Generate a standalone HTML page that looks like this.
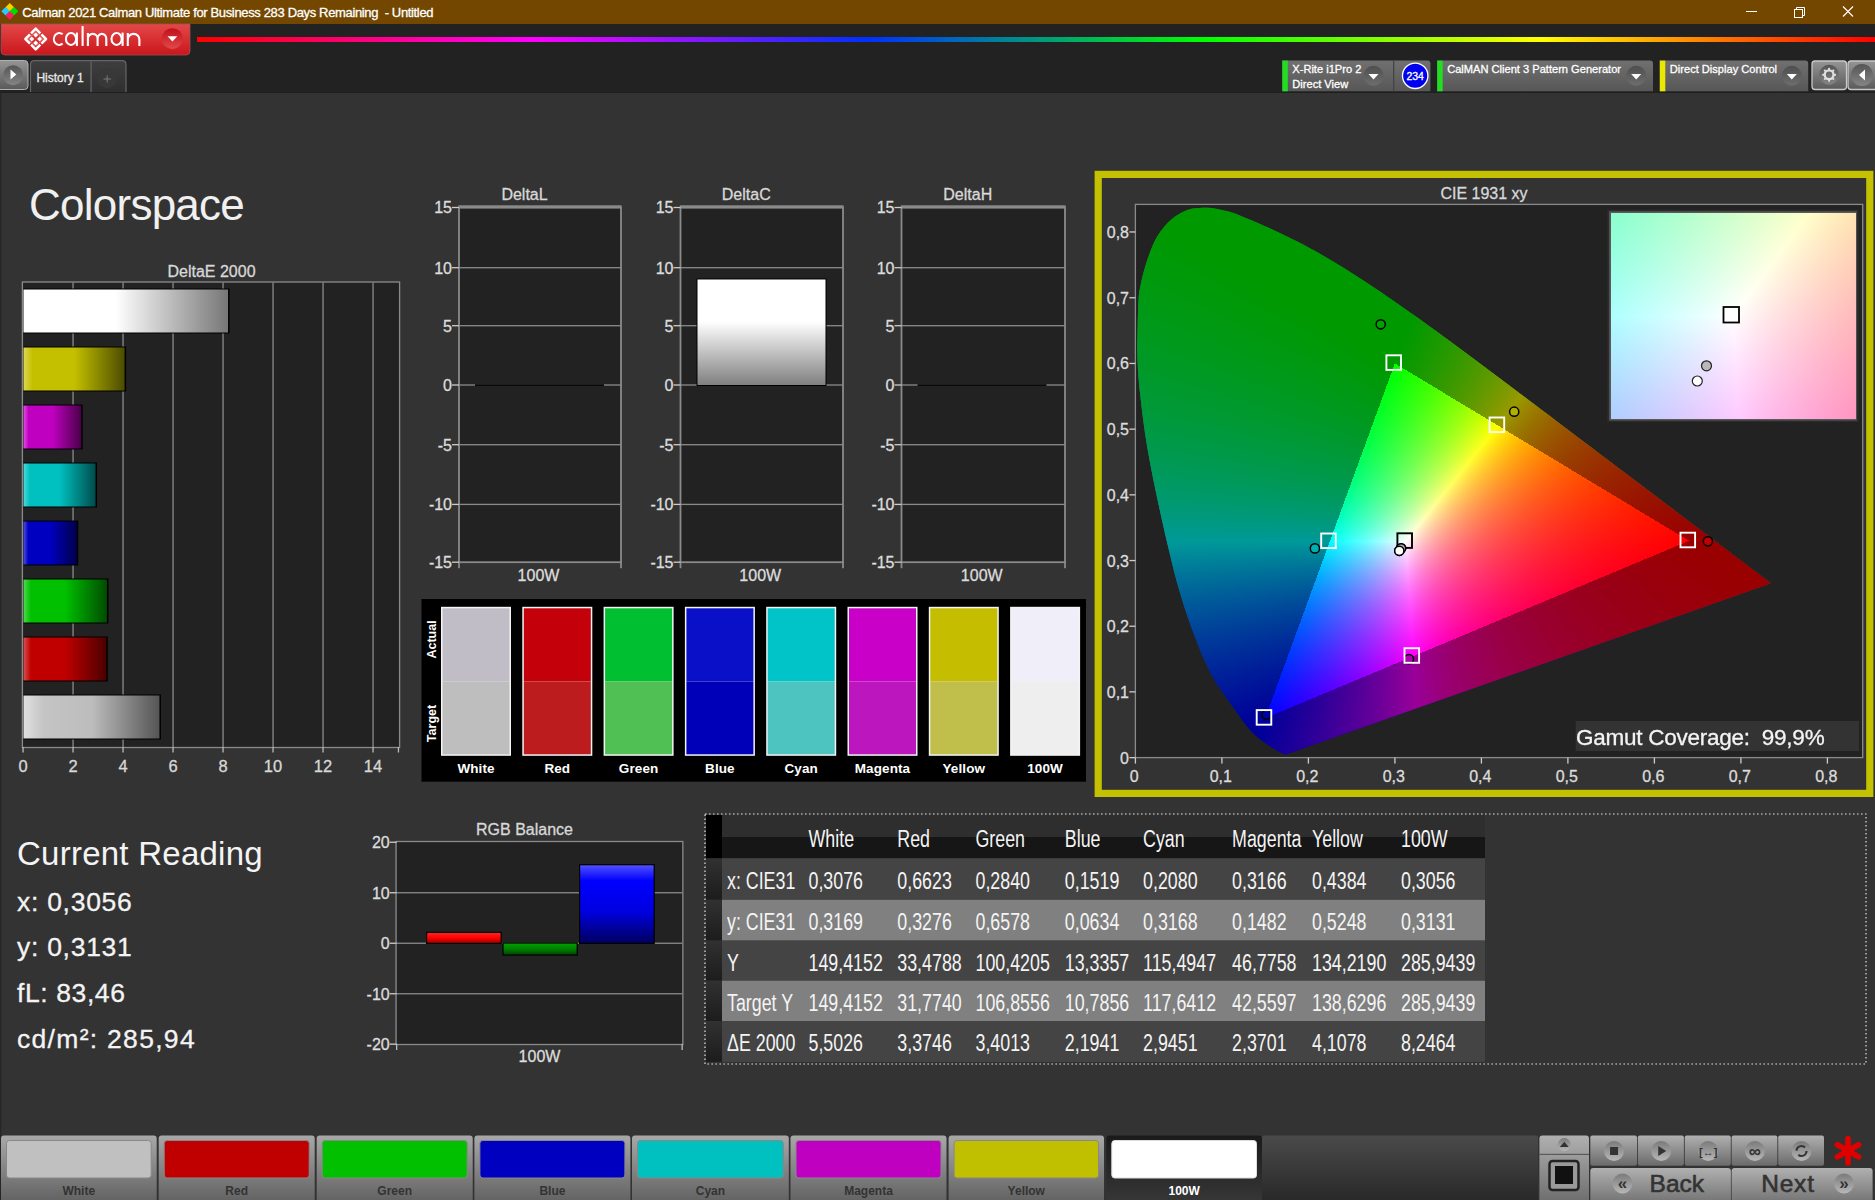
<!DOCTYPE html><html><head><meta charset="utf-8"><title>Calman</title><style>
html,body{margin:0;padding:0;}body{width:1875px;height:1200px;overflow:hidden;position:relative;background:#333;font-family:"Liberation Sans",sans-serif;}
svg{position:absolute;left:0;top:0;} text{font-family:"Liberation Sans",sans-serif;}
#cie{position:absolute;left:1136px;top:205px;}
#ins{position:absolute;left:1611px;top:213px;}
</style></head><body>
<svg id="bg" width="1875" height="1200" viewBox="0 0 1875 1200" style="z-index:0">
<defs>
<linearGradient id="rainbow" x1="0" x2="1" y1="0" y2="0"><stop offset="0" stop-color="#ff0000"/><stop offset="0.2" stop-color="#ff00ff"/><stop offset="0.4" stop-color="#0030ff"/><stop offset="0.6" stop-color="#00ff00"/><stop offset="0.8" stop-color="#ffff00"/><stop offset="1" stop-color="#ff0000"/></linearGradient>
<linearGradient id="redbtn" x1="0" x2="0" y1="0" y2="1"><stop offset="0" stop-color="#e44848"/><stop offset="1" stop-color="#c9161c"/></linearGradient>
<linearGradient id="reddd" x1="0" x2="0" y1="0" y2="1"><stop offset="0" stop-color="#c0101a"/><stop offset="1" stop-color="#e04a4a"/></linearGradient>
<linearGradient id="graybtn" x1="0" x2="0" y1="0" y2="1"><stop offset="0" stop-color="#959595"/><stop offset="1" stop-color="#5a5a5a"/></linearGradient>
<linearGradient id="graycirc" x1="0" x2="0" y1="0" y2="1"><stop offset="0" stop-color="#555"/><stop offset="1" stop-color="#858585"/></linearGradient>
<linearGradient id="tabbg" x1="0" x2="0" y1="0" y2="1"><stop offset="0" stop-color="#3e3e3e"/><stop offset="1" stop-color="#2f2f2f"/></linearGradient>
<linearGradient id="devbg" x1="0" x2="0" y1="0" y2="1"><stop offset="0" stop-color="#707070"/><stop offset="1" stop-color="#575757"/></linearGradient>
<linearGradient id="devcirc" x1="0" x2="0" y1="0" y2="1"><stop offset="0" stop-color="#4e4e4e"/><stop offset="1" stop-color="#6e6e6e"/></linearGradient>
<linearGradient id="hb_w" x1="0" x2="1" y1="0" y2="0"><stop offset="0" stop-color="#ffffff"/><stop offset="0.45" stop-color="#ffffff"/><stop offset="1" stop-color="#777777"/></linearGradient>
<linearGradient id="hb_y" x1="0" x2="1" y1="0" y2="0"><stop offset="0" stop-color="#dcd850"/><stop offset="0.09" stop-color="#c4c000"/><stop offset="0.5" stop-color="#c4c000"/><stop offset="1" stop-color="#4c4c00"/></linearGradient>
<linearGradient id="hb_m" x1="0" x2="1" y1="0" y2="0"><stop offset="0" stop-color="#e050e0"/><stop offset="0.09" stop-color="#c000c0"/><stop offset="0.5" stop-color="#c000c0"/><stop offset="1" stop-color="#4a004a"/></linearGradient>
<linearGradient id="hb_c" x1="0" x2="1" y1="0" y2="0"><stop offset="0" stop-color="#50d8d8"/><stop offset="0.09" stop-color="#00c0c0"/><stop offset="0.5" stop-color="#00c0c0"/><stop offset="1" stop-color="#004c4c"/></linearGradient>
<linearGradient id="hb_b" x1="0" x2="1" y1="0" y2="0"><stop offset="0" stop-color="#5050e0"/><stop offset="0.09" stop-color="#0000c0"/><stop offset="0.5" stop-color="#0000c0"/><stop offset="1" stop-color="#00004c"/></linearGradient>
<linearGradient id="hb_g" x1="0" x2="1" y1="0" y2="0"><stop offset="0" stop-color="#50d850"/><stop offset="0.09" stop-color="#00c000"/><stop offset="0.5" stop-color="#00c000"/><stop offset="1" stop-color="#004c00"/></linearGradient>
<linearGradient id="hb_r" x1="0" x2="1" y1="0" y2="0"><stop offset="0" stop-color="#d85050"/><stop offset="0.09" stop-color="#c00000"/><stop offset="0.5" stop-color="#c00000"/><stop offset="1" stop-color="#4c0000"/></linearGradient>
<linearGradient id="hb_gr" x1="0" x2="1" y1="0" y2="0"><stop offset="0" stop-color="#e0e0e0"/><stop offset="0.15" stop-color="#c4c4c4"/><stop offset="0.5" stop-color="#bdbdbd"/><stop offset="1" stop-color="#555555"/></linearGradient>
<linearGradient id="vb_w" x1="0" x2="0" y1="0" y2="1"><stop offset="0" stop-color="#ffffff"/><stop offset="0.4" stop-color="#ffffff"/><stop offset="1" stop-color="#808080"/></linearGradient>
<linearGradient id="vb_r" x1="0" x2="0" y1="0" y2="1"><stop offset="0" stop-color="#ff2020"/><stop offset="0.5" stop-color="#ff0000"/><stop offset="1" stop-color="#a00000"/></linearGradient>
<linearGradient id="vb_g" x1="0" x2="0" y1="0" y2="1"><stop offset="0" stop-color="#00a000"/><stop offset="0.5" stop-color="#008000"/><stop offset="1" stop-color="#004800"/></linearGradient>
<linearGradient id="vb_b" x1="0" x2="0" y1="0" y2="1"><stop offset="0" stop-color="#5050ff"/><stop offset="0.2" stop-color="#0000ff"/><stop offset="0.6" stop-color="#0000e0"/><stop offset="1" stop-color="#000060"/></linearGradient>
<linearGradient id="btmbtn" x1="0" x2="0" y1="0" y2="1"><stop offset="0" stop-color="#a8a8a8"/><stop offset="1" stop-color="#5e5e5e"/></linearGradient>
<linearGradient id="btmsel" x1="0" x2="0" y1="0" y2="1"><stop offset="0" stop-color="#1a1a1a"/><stop offset="1" stop-color="#383838"/></linearGradient>
<linearGradient id="btmbar" x1="0" x2="0" y1="0" y2="1"><stop offset="0" stop-color="#4a4a4a"/><stop offset="1" stop-color="#262626"/></linearGradient>
<linearGradient id="ctlbtn" x1="0" x2="0" y1="0" y2="1"><stop offset="0" stop-color="#b0b0b0"/><stop offset="1" stop-color="#6a6a6a"/></linearGradient>
<linearGradient id="ctlcirc" x1="0" x2="0" y1="0" y2="1"><stop offset="0" stop-color="#7a7a7a"/><stop offset="1" stop-color="#b8b8b8"/></linearGradient>
<linearGradient id="rowhd" x1="0" x2="0" y1="0" y2="1"><stop offset="0" stop-color="#313131"/><stop offset="1" stop-color="#1c1c1c"/></linearGradient>
</defs>
<rect x="0" y="0" width="1875" height="24" fill="#734700"/>
<polygon points="9.8,2.9000000000000004 14.100000000000001,7.2 9.8,11.5 5.500000000000001,7.2" fill="#ffcc00"/>
<polygon points="5.6,7.000000000000001 9.899999999999999,11.3 5.6,15.600000000000001 1.2999999999999998,11.3" fill="#22ccff"/>
<polygon points="14.0,7.000000000000001 18.3,11.3 14.0,15.600000000000001 9.7,11.3" fill="#00dd00"/>
<polygon points="9.8,11.2 14.100000000000001,15.5 9.8,19.8 5.500000000000001,15.5" fill="#ff1a66"/>
<text x="22.3" y="16.8" font-size="13" fill="#ffffff" text-anchor="start" letter-spacing="-0.35" stroke="#ffffff" stroke-width="0.3" >Calman 2021 Calman Ultimate for Business 283 Days Remaining &#160;- Untitled</text>
<rect x="1746" y="11" width="11" height="1" fill="#fff"/>
<rect x="1794.5" y="9.5" width="8" height="8" fill="none" stroke="#fff" stroke-width="1"/>
<path d="M1796.5 9.5 V7.5 H1804.5 V15.5 H1802.5" fill="none" stroke="#fff" stroke-width="1"/>
<path d="M1843 6.5 L1853 16.5 M1853 6.5 L1843 16.5" stroke="#fff" stroke-width="1.1"/>
<rect x="0" y="24" width="1875" height="68" fill="#222222"/>
<path d="M1 24 H190 V51 Q190 55 186 55 H5 Q1 55 1 51 Z" fill="url(#redbtn)" stroke="#9a5050" stroke-width="0.8"/>
<g transform="translate(35.7,39) rotate(45)"><path d="M0.75 -7.3 H7.3 V-0.75 M7.3 0.75 V7.3 H0.75 M-0.75 7.3 H-7.3 V0.75 M-7.3 -0.75 V-7.3 H-0.75" fill="none" stroke="#fff" stroke-width="2.5" stroke-linejoin="round"/><rect x="-5.3" y="-5.3" width="10.6" height="10.6" fill="none" stroke="rgba(255,255,255,0.3)" stroke-width="0.8"/><rect x="-4.6" y="-4.6" width="3.6" height="3.6" rx="0.4" fill="#fff"/><rect x="1.0" y="-4.6" width="3.6" height="3.6" rx="0.4" fill="#fff"/><rect x="-4.6" y="1.0" width="3.6" height="3.6" rx="0.4" fill="#fff"/><rect x="1.0" y="1.0" width="3.6" height="3.6" rx="0.4" fill="#fff"/></g>
<g fill="none" stroke="#fff" stroke-width="2.1"><path d="M62.6 34.35 A5.3 6.0 0 1 0 62.6 43.55"/><ellipse cx="71.0" cy="38.95" rx="5.1" ry="6.0"/><path d="M76.9 32.6 V45.9"/><path d="M82.6 26.1 V45.9"/><path d="M87.9 33 V45.9 M87.9 38.7 A4.85 4.85 0 0 1 97.6 38.7 V45.9 M97.6 38.7 A4.35 4.85 0 0 1 106.3 38.7 V45.9"/><ellipse cx="116.6" cy="38.95" rx="5.1" ry="6.0"/><path d="M122.6 32.6 V45.9"/><path d="M127.8 33 V45.9 M127.8 39.7 A5.8 5.8 0 0 1 139.4 39.7 V45.9"/></g>
<circle cx="172.3" cy="38.7" r="10.5" fill="url(#reddd)"/>
<polygon points="167.5,36.2 177.3,36.2 172.4,41.6" fill="#fff"/>
<rect x="197" y="37" width="1678" height="5" fill="url(#rainbow)"/>
<path d="M-2 60.5 H24.5 Q28 60.5 28 64 V86 Q28 89.5 24.5 89.5 H-2 Z" fill="url(#graybtn)" stroke="#b0b0b0" stroke-width="1"/>
<circle cx="13.1" cy="75.2" r="10" fill="url(#graycirc)"/>
<polygon points="10.5,69.6 16.3,74.6 10.5,79.6" fill="#fff"/>
<path d="M30.5 92 V64.5 Q30.5 60.7 34.5 60.7 H122 Q126 60.7 126 64.5 V92" fill="url(#tabbg)" stroke="#666" stroke-width="1.2"/>
<rect x="90.3" y="61" width="1.6" height="31" fill="#5a5a5a"/>
<text x="36.4" y="81.6" font-size="12" fill="#e8e8e8" text-anchor="start" stroke="#e8e8e8" stroke-width="0.3" >History 1</text>
<circle cx="107.2" cy="78.2" r="10" fill="#383838"/>
<path d="M103.5 79 H111 M107.2 75.3 V82.7" stroke="#7a7a7a" stroke-width="1"/>
<path d="M1282.3 91.3 V60.6 H1427.4 Q1430.4 60.6 1430.4 63.6 V91.3 Z" fill="url(#devbg)"/><rect x="1282.3" y="60.6" width="5.5" height="30.7" fill="#22dd22"/><text x="1292.3" y="72.6" font-size="11.1" fill="#ffffff" text-anchor="start" stroke="#ffffff" stroke-width="0.3" >X-Rite i1Pro 2</text><text x="1292.3" y="88.0" font-size="11.1" fill="#ffffff" text-anchor="start" stroke="#ffffff" stroke-width="0.3" >Direct View</text><circle cx="1373.5" cy="75.8" r="10" fill="url(#devcirc)"/><polygon points="1368.5,74 1378.5,74 1373.5,79.5" fill="#fff"/>
<rect x="1393" y="61" width="1.3" height="30.3" fill="#444"/>
<circle cx="1415.2" cy="75.8" r="12.7" fill="#0000f0" stroke="#fff" stroke-width="1.3"/>
<text x="1415.2" y="79.8" font-size="10.5" fill="#ffffff" text-anchor="middle" stroke="#ffffff" stroke-width="0.3" >234</text>
<path d="M1437.2 91.3 V60.6 H1650 Q1653 60.6 1653 63.6 V91.3 Z" fill="url(#devbg)"/><rect x="1437.2" y="60.6" width="5.5" height="30.7" fill="#22dd22"/><text x="1447.2" y="72.6" font-size="11.1" fill="#ffffff" text-anchor="start" stroke="#ffffff" stroke-width="0.3" >CalMAN Client 3 Pattern Generator</text><circle cx="1636.2" cy="75.8" r="10" fill="url(#devcirc)"/><polygon points="1631.2,74 1641.2,74 1636.2,79.5" fill="#fff"/>
<path d="M1659.8 91.3 V60.6 H1805.2 Q1808.2 60.6 1808.2 63.6 V91.3 Z" fill="url(#devbg)"/><rect x="1659.8" y="60.6" width="5.5" height="30.7" fill="#e8e800"/><text x="1669.8" y="72.6" font-size="11.1" fill="#ffffff" text-anchor="start" stroke="#ffffff" stroke-width="0.3" >Direct Display Control</text><circle cx="1791.8" cy="75.8" r="10" fill="url(#devcirc)"/><polygon points="1786.8,74 1796.8,74 1791.8,79.5" fill="#fff"/>
<rect x="1812" y="61" width="34.5" height="28.5" rx="3" fill="url(#graybtn)" stroke="#c8c8c8" stroke-width="1.3"/>
<circle cx="1829.1" cy="74.8" r="10" fill="url(#graycirc)"/>
<g transform="translate(1829.1,74.8)" fill="#e0e0e0"><circle r="4.4" fill="none" stroke="#e0e0e0" stroke-width="2.3"/><rect x="-0.95" y="-6.9" width="1.9" height="3" transform="rotate(0)"/><rect x="-0.95" y="-6.9" width="1.9" height="3" transform="rotate(45)"/><rect x="-0.95" y="-6.9" width="1.9" height="3" transform="rotate(90)"/><rect x="-0.95" y="-6.9" width="1.9" height="3" transform="rotate(135)"/><rect x="-0.95" y="-6.9" width="1.9" height="3" transform="rotate(180)"/><rect x="-0.95" y="-6.9" width="1.9" height="3" transform="rotate(225)"/><rect x="-0.95" y="-6.9" width="1.9" height="3" transform="rotate(270)"/><rect x="-0.95" y="-6.9" width="1.9" height="3" transform="rotate(315)"/></g>
<rect x="1848" y="61" width="30" height="28.5" rx="3" fill="url(#graybtn)" stroke="#c8c8c8" stroke-width="1.3"/>
<circle cx="1862" cy="75" r="11" fill="url(#graycirc)"/>
<polygon points="1865,69.5 1859,75 1865,80.5" fill="#fff"/>
<rect x="0" y="92" width="1875" height="1" fill="#1f1f1f"/><rect x="0" y="93" width="1875" height="1107" fill="#333333"/>
<rect x="0" y="92" width="1.2" height="1108" fill="#262626"/>
<text x="29" y="220.3" font-size="44" fill="#f0f0f0" text-anchor="start" letter-spacing="-0.75" >Colorspace</text>
<text x="211.5" y="276.6" font-size="16" fill="#d8d8d8" text-anchor="middle" stroke="#d8d8d8" stroke-width="0.3" >DeltaE 2000</text>
<rect x="23" y="282.5" width="376" height="464.5" fill="#222222"/>
<rect x="72.4" y="282.5" width="1.3" height="465" fill="#8a8a8a"/>
<rect x="122.4" y="282.5" width="1.3" height="465" fill="#8a8a8a"/>
<rect x="172.4" y="282.5" width="1.3" height="465" fill="#8a8a8a"/>
<rect x="222.4" y="282.5" width="1.3" height="465" fill="#8a8a8a"/>
<rect x="272.4" y="282.5" width="1.3" height="465" fill="#8a8a8a"/>
<rect x="322.4" y="282.5" width="1.3" height="465" fill="#8a8a8a"/>
<rect x="372.4" y="282.5" width="1.3" height="465" fill="#8a8a8a"/>
<rect x="22.4" y="282" width="377.2" height="465.5" fill="none" stroke="#8a8a8a" stroke-width="1.3"/>
<rect x="23.5" y="288.5" width="206.06" height="45" fill="#000"/>
<rect x="23.5" y="289.5" width="204.56" height="43" fill="url(#hb_w)"/>
<rect x="23.5" y="346.5" width="102.59500000000001" height="45" fill="#000"/>
<rect x="23.5" y="347.5" width="101.09500000000001" height="43" fill="url(#hb_y)"/>
<rect x="23.5" y="404.5" width="59.152499999999996" height="45" fill="#000"/>
<rect x="23.5" y="405.5" width="57.652499999999996" height="43" fill="url(#hb_m)"/>
<rect x="23.5" y="462.5" width="73.5275" height="45" fill="#000"/>
<rect x="23.5" y="463.5" width="72.0275" height="43" fill="url(#hb_c)"/>
<rect x="23.5" y="520.5" width="54.752500000000005" height="45" fill="#000"/>
<rect x="23.5" y="521.5" width="53.252500000000005" height="43" fill="url(#hb_b)"/>
<rect x="23.5" y="578.5" width="84.9325" height="45" fill="#000"/>
<rect x="23.5" y="579.5" width="83.4325" height="43" fill="url(#hb_g)"/>
<rect x="23.5" y="636.5" width="84.265" height="45" fill="#000"/>
<rect x="23.5" y="637.5" width="82.765" height="43" fill="url(#hb_r)"/>
<rect x="23.5" y="694.5" width="137.465" height="45" fill="#000"/>
<rect x="23.5" y="695.5" width="135.965" height="43" fill="url(#hb_gr)"/>
<rect x="22.4" y="747" width="1.3" height="5.5" fill="#bbbbbb"/>
<text x="23" y="771.7" font-size="16.5" fill="#d8d8d8" text-anchor="middle" stroke="#d8d8d8" stroke-width="0.3" >0</text>
<rect x="72.4" y="747" width="1.3" height="5.5" fill="#bbbbbb"/>
<text x="73" y="771.7" font-size="16.5" fill="#d8d8d8" text-anchor="middle" stroke="#d8d8d8" stroke-width="0.3" >2</text>
<rect x="122.4" y="747" width="1.3" height="5.5" fill="#bbbbbb"/>
<text x="123" y="771.7" font-size="16.5" fill="#d8d8d8" text-anchor="middle" stroke="#d8d8d8" stroke-width="0.3" >4</text>
<rect x="172.4" y="747" width="1.3" height="5.5" fill="#bbbbbb"/>
<text x="173" y="771.7" font-size="16.5" fill="#d8d8d8" text-anchor="middle" stroke="#d8d8d8" stroke-width="0.3" >6</text>
<rect x="222.4" y="747" width="1.3" height="5.5" fill="#bbbbbb"/>
<text x="223" y="771.7" font-size="16.5" fill="#d8d8d8" text-anchor="middle" stroke="#d8d8d8" stroke-width="0.3" >8</text>
<rect x="272.4" y="747" width="1.3" height="5.5" fill="#bbbbbb"/>
<text x="273" y="771.7" font-size="16.5" fill="#d8d8d8" text-anchor="middle" stroke="#d8d8d8" stroke-width="0.3" >10</text>
<rect x="322.4" y="747" width="1.3" height="5.5" fill="#bbbbbb"/>
<text x="323" y="771.7" font-size="16.5" fill="#d8d8d8" text-anchor="middle" stroke="#d8d8d8" stroke-width="0.3" >12</text>
<rect x="372.4" y="747" width="1.3" height="5.5" fill="#bbbbbb"/>
<text x="373" y="771.7" font-size="16.5" fill="#d8d8d8" text-anchor="middle" stroke="#d8d8d8" stroke-width="0.3" >14</text>
<rect x="397.8" y="747" width="1.3" height="5.5" fill="#bbbbbb"/>
<text x="524.5" y="200.3" font-size="16" fill="#d8d8d8" text-anchor="middle" stroke="#d8d8d8" stroke-width="0.3" >DeltaL</text>
<rect x="459" y="207" width="162" height="355.20000000000005" fill="#222222"/>
<rect x="459" y="267.05" width="162" height="1.3" fill="#8a8a8a"/>
<rect x="459" y="325.05" width="162" height="1.3" fill="#8a8a8a"/>
<rect x="459" y="384.35" width="162" height="1.3" fill="#8a8a8a"/>
<rect x="459" y="444.05" width="162" height="1.3" fill="#8a8a8a"/>
<rect x="459" y="503.75" width="162" height="1.3" fill="#8a8a8a"/>
<rect x="458.35" y="205.3" width="163.3" height="3.3" fill="#8a8a8a"/>
<rect x="458.1" y="207" width="1.8" height="361.20000000000005" fill="#8a8a8a"/>
<rect x="620.1" y="207" width="1.8" height="361.20000000000005" fill="#8a8a8a"/>
<rect x="458.1" y="561.3000000000001" width="163.8" height="1.8" fill="#8a8a8a"/>
<rect x="452" y="206.85" width="7" height="1.3" fill="#cccccc"/>
<text x="452" y="213.4" font-size="16" fill="#dcdcdc" text-anchor="end" stroke="#dcdcdc" stroke-width="0.3" >15</text>
<rect x="452" y="267.05" width="7" height="1.3" fill="#cccccc"/>
<text x="452" y="273.59999999999997" font-size="16" fill="#dcdcdc" text-anchor="end" stroke="#dcdcdc" stroke-width="0.3" >10</text>
<rect x="452" y="325.05" width="7" height="1.3" fill="#cccccc"/>
<text x="452" y="331.59999999999997" font-size="16" fill="#dcdcdc" text-anchor="end" stroke="#dcdcdc" stroke-width="0.3" >5</text>
<rect x="452" y="384.35" width="7" height="1.3" fill="#cccccc"/>
<text x="452" y="390.9" font-size="16" fill="#dcdcdc" text-anchor="end" stroke="#dcdcdc" stroke-width="0.3" >0</text>
<rect x="452" y="444.05" width="7" height="1.3" fill="#cccccc"/>
<text x="452" y="450.59999999999997" font-size="16" fill="#dcdcdc" text-anchor="end" stroke="#dcdcdc" stroke-width="0.3" >-5</text>
<rect x="452" y="503.75" width="7" height="1.3" fill="#cccccc"/>
<text x="452" y="510.29999999999995" font-size="16" fill="#dcdcdc" text-anchor="end" stroke="#dcdcdc" stroke-width="0.3" >-10</text>
<rect x="452" y="561.5500000000001" width="7" height="1.3" fill="#cccccc"/>
<text x="452" y="568.1" font-size="16" fill="#dcdcdc" text-anchor="end" stroke="#dcdcdc" stroke-width="0.3" >-15</text>
<text x="538.5" y="580.5" font-size="16" fill="#dcdcdc" text-anchor="middle" stroke="#dcdcdc" stroke-width="0.3" >100W</text>
<rect x="475" y="384.2" width="129" height="1.8" fill="#0a0a0a"/>
<text x="746.25" y="200.3" font-size="16" fill="#d8d8d8" text-anchor="middle" stroke="#d8d8d8" stroke-width="0.3" >DeltaC</text>
<rect x="680.5" y="207" width="162.5" height="355.20000000000005" fill="#222222"/>
<rect x="680.5" y="267.05" width="162.5" height="1.3" fill="#8a8a8a"/>
<rect x="680.5" y="325.05" width="162.5" height="1.3" fill="#8a8a8a"/>
<rect x="680.5" y="384.35" width="162.5" height="1.3" fill="#8a8a8a"/>
<rect x="680.5" y="444.05" width="162.5" height="1.3" fill="#8a8a8a"/>
<rect x="680.5" y="503.75" width="162.5" height="1.3" fill="#8a8a8a"/>
<rect x="679.85" y="205.3" width="163.8" height="3.3" fill="#8a8a8a"/>
<rect x="679.6" y="207" width="1.8" height="361.20000000000005" fill="#8a8a8a"/>
<rect x="842.1" y="207" width="1.8" height="361.20000000000005" fill="#8a8a8a"/>
<rect x="679.6" y="561.3000000000001" width="164.3" height="1.8" fill="#8a8a8a"/>
<rect x="673.5" y="206.85" width="7" height="1.3" fill="#cccccc"/>
<text x="673.5" y="213.4" font-size="16" fill="#dcdcdc" text-anchor="end" stroke="#dcdcdc" stroke-width="0.3" >15</text>
<rect x="673.5" y="267.05" width="7" height="1.3" fill="#cccccc"/>
<text x="673.5" y="273.59999999999997" font-size="16" fill="#dcdcdc" text-anchor="end" stroke="#dcdcdc" stroke-width="0.3" >10</text>
<rect x="673.5" y="325.05" width="7" height="1.3" fill="#cccccc"/>
<text x="673.5" y="331.59999999999997" font-size="16" fill="#dcdcdc" text-anchor="end" stroke="#dcdcdc" stroke-width="0.3" >5</text>
<rect x="673.5" y="384.35" width="7" height="1.3" fill="#cccccc"/>
<text x="673.5" y="390.9" font-size="16" fill="#dcdcdc" text-anchor="end" stroke="#dcdcdc" stroke-width="0.3" >0</text>
<rect x="673.5" y="444.05" width="7" height="1.3" fill="#cccccc"/>
<text x="673.5" y="450.59999999999997" font-size="16" fill="#dcdcdc" text-anchor="end" stroke="#dcdcdc" stroke-width="0.3" >-5</text>
<rect x="673.5" y="503.75" width="7" height="1.3" fill="#cccccc"/>
<text x="673.5" y="510.29999999999995" font-size="16" fill="#dcdcdc" text-anchor="end" stroke="#dcdcdc" stroke-width="0.3" >-10</text>
<rect x="673.5" y="561.5500000000001" width="7" height="1.3" fill="#cccccc"/>
<text x="673.5" y="568.1" font-size="16" fill="#dcdcdc" text-anchor="end" stroke="#dcdcdc" stroke-width="0.3" >-15</text>
<text x="760.25" y="580.5" font-size="16" fill="#dcdcdc" text-anchor="middle" stroke="#dcdcdc" stroke-width="0.3" >100W</text>
<rect x="696.5" y="278.4746" width="130.0" height="107.52539999999999" fill="#000"/>
<rect x="697.5" y="279.4746" width="128.0" height="105.52539999999999" fill="url(#vb_w)"/>
<text x="967.75" y="200.3" font-size="16" fill="#d8d8d8" text-anchor="middle" stroke="#d8d8d8" stroke-width="0.3" >DeltaH</text>
<rect x="901.5" y="207" width="163.5" height="355.20000000000005" fill="#222222"/>
<rect x="901.5" y="267.05" width="163.5" height="1.3" fill="#8a8a8a"/>
<rect x="901.5" y="325.05" width="163.5" height="1.3" fill="#8a8a8a"/>
<rect x="901.5" y="384.35" width="163.5" height="1.3" fill="#8a8a8a"/>
<rect x="901.5" y="444.05" width="163.5" height="1.3" fill="#8a8a8a"/>
<rect x="901.5" y="503.75" width="163.5" height="1.3" fill="#8a8a8a"/>
<rect x="900.85" y="205.3" width="164.8" height="3.3" fill="#8a8a8a"/>
<rect x="900.6" y="207" width="1.8" height="361.20000000000005" fill="#8a8a8a"/>
<rect x="1064.1" y="207" width="1.8" height="361.20000000000005" fill="#8a8a8a"/>
<rect x="900.6" y="561.3000000000001" width="165.3" height="1.8" fill="#8a8a8a"/>
<rect x="894.5" y="206.85" width="7" height="1.3" fill="#cccccc"/>
<text x="894.5" y="213.4" font-size="16" fill="#dcdcdc" text-anchor="end" stroke="#dcdcdc" stroke-width="0.3" >15</text>
<rect x="894.5" y="267.05" width="7" height="1.3" fill="#cccccc"/>
<text x="894.5" y="273.59999999999997" font-size="16" fill="#dcdcdc" text-anchor="end" stroke="#dcdcdc" stroke-width="0.3" >10</text>
<rect x="894.5" y="325.05" width="7" height="1.3" fill="#cccccc"/>
<text x="894.5" y="331.59999999999997" font-size="16" fill="#dcdcdc" text-anchor="end" stroke="#dcdcdc" stroke-width="0.3" >5</text>
<rect x="894.5" y="384.35" width="7" height="1.3" fill="#cccccc"/>
<text x="894.5" y="390.9" font-size="16" fill="#dcdcdc" text-anchor="end" stroke="#dcdcdc" stroke-width="0.3" >0</text>
<rect x="894.5" y="444.05" width="7" height="1.3" fill="#cccccc"/>
<text x="894.5" y="450.59999999999997" font-size="16" fill="#dcdcdc" text-anchor="end" stroke="#dcdcdc" stroke-width="0.3" >-5</text>
<rect x="894.5" y="503.75" width="7" height="1.3" fill="#cccccc"/>
<text x="894.5" y="510.29999999999995" font-size="16" fill="#dcdcdc" text-anchor="end" stroke="#dcdcdc" stroke-width="0.3" >-10</text>
<rect x="894.5" y="561.5500000000001" width="7" height="1.3" fill="#cccccc"/>
<text x="894.5" y="568.1" font-size="16" fill="#dcdcdc" text-anchor="end" stroke="#dcdcdc" stroke-width="0.3" >-15</text>
<text x="981.75" y="580.5" font-size="16" fill="#dcdcdc" text-anchor="middle" stroke="#dcdcdc" stroke-width="0.3" >100W</text>
<rect x="917.5" y="384.2" width="129.0" height="1.8" fill="#0a0a0a"/>
<rect x="421.5" y="599" width="664.5" height="182.7" fill="#000"/>
<rect x="441.0" y="606.8" width="70" height="149" fill="#f4f4f4"/>
<rect x="442.5" y="608.3" width="67" height="73.2" fill="#c1bdc7"/>
<rect x="442.5" y="681.5" width="67" height="72.8" fill="#bebebe"/>
<text x="476.0" y="773.3" font-size="13.5" fill="#ffffff" text-anchor="middle" font-weight="bold" letter-spacing="0.1" >White</text>
<rect x="522.3" y="606.8" width="70" height="149" fill="#f4f4f4"/>
<rect x="523.8" y="608.3" width="67" height="73.2" fill="#c4000a"/>
<rect x="523.8" y="681.5" width="67" height="72.8" fill="#bd1c1e"/>
<text x="557.3" y="773.3" font-size="13.5" fill="#ffffff" text-anchor="middle" font-weight="bold" letter-spacing="0.1" >Red</text>
<rect x="603.6" y="606.8" width="70" height="149" fill="#f4f4f4"/>
<rect x="605.1" y="608.3" width="67" height="73.2" fill="#00bf30"/>
<rect x="605.1" y="681.5" width="67" height="72.8" fill="#50c055"/>
<text x="638.6" y="773.3" font-size="13.5" fill="#ffffff" text-anchor="middle" font-weight="bold" letter-spacing="0.1" >Green</text>
<rect x="684.9" y="606.8" width="70" height="149" fill="#f4f4f4"/>
<rect x="686.4" y="608.3" width="67" height="73.2" fill="#0a10c8"/>
<rect x="686.4" y="681.5" width="67" height="72.8" fill="#0000b8"/>
<text x="719.9" y="773.3" font-size="13.5" fill="#ffffff" text-anchor="middle" font-weight="bold" letter-spacing="0.1" >Blue</text>
<rect x="766.2" y="606.8" width="70" height="149" fill="#f4f4f4"/>
<rect x="767.7" y="608.3" width="67" height="73.2" fill="#00c4c8"/>
<rect x="767.7" y="681.5" width="67" height="72.8" fill="#4dc4c0"/>
<text x="801.2" y="773.3" font-size="13.5" fill="#ffffff" text-anchor="middle" font-weight="bold" letter-spacing="0.1" >Cyan</text>
<rect x="847.5" y="606.8" width="70" height="149" fill="#f4f4f4"/>
<rect x="849.0" y="608.3" width="67" height="73.2" fill="#c800c8"/>
<rect x="849.0" y="681.5" width="67" height="72.8" fill="#bc16bf"/>
<text x="882.5" y="773.3" font-size="13.5" fill="#ffffff" text-anchor="middle" font-weight="bold" letter-spacing="0.1" >Magenta</text>
<rect x="928.8" y="606.8" width="70" height="149" fill="#f4f4f4"/>
<rect x="930.3" y="608.3" width="67" height="73.2" fill="#c4bd00"/>
<rect x="930.3" y="681.5" width="67" height="72.8" fill="#c0bf4c"/>
<text x="963.8" y="773.3" font-size="13.5" fill="#ffffff" text-anchor="middle" font-weight="bold" letter-spacing="0.1" >Yellow</text>
<rect x="1010.1" y="606.8" width="70" height="149" fill="#f4f4f4"/>
<rect x="1011.6" y="608.3" width="67" height="73.2" fill="#f0eef8"/>
<rect x="1011.6" y="681.5" width="67" height="72.8" fill="#eeeeee"/>
<text x="1045.1" y="773.3" font-size="13.5" fill="#ffffff" text-anchor="middle" font-weight="bold" letter-spacing="0.1" >100W</text>
<text x="0" y="0" font-size="12.5" fill="#ffffff" text-anchor="middle" font-weight="bold" transform="translate(435.8,639.5) rotate(-90)">Actual</text>
<text x="0" y="0" font-size="12.5" fill="#ffffff" text-anchor="middle" font-weight="bold" transform="translate(435.8,723.5) rotate(-90)">Target</text>
<rect x="1098.2" y="174.4" width="771.6" height="619" fill="none" stroke="#c4c200" stroke-width="7.2"/>
<text x="1484" y="198.7" font-size="16" fill="#d8d8d8" text-anchor="middle" stroke="#d8d8d8" stroke-width="0.3" >CIE 1931 xy</text>
<rect x="1135.4" y="204.4" width="727.3" height="353.2" fill="#222222"/>
<rect x="1135.4" y="204.4" width="727.3" height="553.2" fill="#222222" stroke="#8a8a8a" stroke-width="1.3"/>
<rect x="1134.75" y="757.6" width="1.3" height="6" fill="#cccccc"/>
<text x="1134.3" y="782" font-size="16" fill="#dcdcdc" text-anchor="middle" stroke="#dcdcdc" stroke-width="0.3" >0</text>
<rect x="1221.25" y="757.6" width="1.3" height="6" fill="#cccccc"/>
<text x="1220.8" y="782" font-size="16" fill="#dcdcdc" text-anchor="middle" stroke="#dcdcdc" stroke-width="0.3" >0,1</text>
<rect x="1307.75" y="757.6" width="1.3" height="6" fill="#cccccc"/>
<text x="1307.3" y="782" font-size="16" fill="#dcdcdc" text-anchor="middle" stroke="#dcdcdc" stroke-width="0.3" >0,2</text>
<rect x="1394.25" y="757.6" width="1.3" height="6" fill="#cccccc"/>
<text x="1393.8" y="782" font-size="16" fill="#dcdcdc" text-anchor="middle" stroke="#dcdcdc" stroke-width="0.3" >0,3</text>
<rect x="1480.75" y="757.6" width="1.3" height="6" fill="#cccccc"/>
<text x="1480.3" y="782" font-size="16" fill="#dcdcdc" text-anchor="middle" stroke="#dcdcdc" stroke-width="0.3" >0,4</text>
<rect x="1567.25" y="757.6" width="1.3" height="6" fill="#cccccc"/>
<text x="1566.8" y="782" font-size="16" fill="#dcdcdc" text-anchor="middle" stroke="#dcdcdc" stroke-width="0.3" >0,5</text>
<rect x="1653.75" y="757.6" width="1.3" height="6" fill="#cccccc"/>
<text x="1653.3" y="782" font-size="16" fill="#dcdcdc" text-anchor="middle" stroke="#dcdcdc" stroke-width="0.3" >0,6</text>
<rect x="1740.25" y="757.6" width="1.3" height="6" fill="#cccccc"/>
<text x="1739.8" y="782" font-size="16" fill="#dcdcdc" text-anchor="middle" stroke="#dcdcdc" stroke-width="0.3" >0,7</text>
<rect x="1826.75" y="757.6" width="1.3" height="6" fill="#cccccc"/>
<text x="1826.3" y="782" font-size="16" fill="#dcdcdc" text-anchor="middle" stroke="#dcdcdc" stroke-width="0.3" >0,8</text>
<rect x="1129.4" y="757.0" width="6" height="1.3" fill="#cccccc"/>
<text x="1129" y="763.6" font-size="16" fill="#dcdcdc" text-anchor="end" stroke="#dcdcdc" stroke-width="0.3" >0</text>
<rect x="1129.4" y="691.2" width="6" height="1.3" fill="#cccccc"/>
<text x="1129" y="697.9" font-size="16" fill="#dcdcdc" text-anchor="end" stroke="#dcdcdc" stroke-width="0.3" >0,1</text>
<rect x="1129.4" y="625.6" width="6" height="1.3" fill="#cccccc"/>
<text x="1129" y="632.2" font-size="16" fill="#dcdcdc" text-anchor="end" stroke="#dcdcdc" stroke-width="0.3" >0,2</text>
<rect x="1129.4" y="559.9" width="6" height="1.3" fill="#cccccc"/>
<text x="1129" y="566.5" font-size="16" fill="#dcdcdc" text-anchor="end" stroke="#dcdcdc" stroke-width="0.3" >0,3</text>
<rect x="1129.4" y="494.2" width="6" height="1.3" fill="#cccccc"/>
<text x="1129" y="500.8" font-size="16" fill="#dcdcdc" text-anchor="end" stroke="#dcdcdc" stroke-width="0.3" >0,4</text>
<rect x="1129.4" y="428.5" width="6" height="1.3" fill="#cccccc"/>
<text x="1129" y="435.1" font-size="16" fill="#dcdcdc" text-anchor="end" stroke="#dcdcdc" stroke-width="0.3" >0,5</text>
<rect x="1129.4" y="362.8" width="6" height="1.3" fill="#cccccc"/>
<text x="1129" y="369.4" font-size="16" fill="#dcdcdc" text-anchor="end" stroke="#dcdcdc" stroke-width="0.3" >0,6</text>
<rect x="1129.4" y="297.1" width="6" height="1.3" fill="#cccccc"/>
<text x="1129" y="303.7" font-size="16" fill="#dcdcdc" text-anchor="end" stroke="#dcdcdc" stroke-width="0.3" >0,7</text>
<rect x="1129.4" y="231.3" width="6" height="1.3" fill="#cccccc"/>
<text x="1129" y="238.0" font-size="16" fill="#dcdcdc" text-anchor="end" stroke="#dcdcdc" stroke-width="0.3" >0,8</text>
<rect x="1607.3" y="209.6" width="251.2" height="212.4" fill="#2c2c2c"/>
<rect x="1609.2" y="211.3" width="247.6" height="209.2" fill="#5a5a5a" />
<text x="17" y="864.5" font-size="33" fill="#f4f4f4" text-anchor="start" letter-spacing="0.25" >Current Reading</text>
<text x="17" y="910.5" font-size="26.5" fill="#f4f4f4" text-anchor="start" letter-spacing="0.72" stroke="#f4f4f4" stroke-width="0.3" >x: 0,3056</text>
<text x="17" y="956.2" font-size="26.5" fill="#f4f4f4" text-anchor="start" letter-spacing="0.72" stroke="#f4f4f4" stroke-width="0.3" >y: 0,3131</text>
<text x="17" y="1001.9" font-size="26.5" fill="#f4f4f4" text-anchor="start" letter-spacing="0.6" stroke="#f4f4f4" stroke-width="0.3" >fL: 83,46</text>
<text x="17" y="1047.6" font-size="26.5" fill="#f4f4f4" text-anchor="start" letter-spacing="1.3" stroke="#f4f4f4" stroke-width="0.3" >cd/m&#178;: 285,94</text>
<text x="524.5" y="835" font-size="16" fill="#d8d8d8" text-anchor="middle" stroke="#d8d8d8" stroke-width="0.3" >RGB Balance</text>
<rect x="396.7" y="841.5" width="285.5" height="202.5" fill="#222222"/>
<rect x="396.7" y="892.1" width="285.5" height="1.3" fill="#8a8a8a"/>
<rect x="396.7" y="942.6" width="285.5" height="1.3" fill="#8a8a8a"/>
<rect x="396.7" y="993.1" width="285.5" height="1.3" fill="#8a8a8a"/>
<rect x="396.05" y="841.5" width="286.8" height="203" fill="none" stroke="#8a8a8a" stroke-width="1.3"/>
<rect x="389.7" y="841.6" width="7" height="1.3" fill="#cccccc"/>
<text x="389.7" y="848.4" font-size="16" fill="#dcdcdc" text-anchor="end" stroke="#dcdcdc" stroke-width="0.3" >20</text>
<rect x="389.7" y="892.1" width="7" height="1.3" fill="#cccccc"/>
<text x="389.7" y="898.9" font-size="16" fill="#dcdcdc" text-anchor="end" stroke="#dcdcdc" stroke-width="0.3" >10</text>
<rect x="389.7" y="942.6" width="7" height="1.3" fill="#cccccc"/>
<text x="389.7" y="949.4" font-size="16" fill="#dcdcdc" text-anchor="end" stroke="#dcdcdc" stroke-width="0.3" >0</text>
<rect x="389.7" y="993.1" width="7" height="1.3" fill="#cccccc"/>
<text x="389.7" y="999.9" font-size="16" fill="#dcdcdc" text-anchor="end" stroke="#dcdcdc" stroke-width="0.3" >-10</text>
<rect x="389.7" y="1043.5" width="7" height="1.3" fill="#cccccc"/>
<text x="389.7" y="1050.4" font-size="16" fill="#dcdcdc" text-anchor="end" stroke="#dcdcdc" stroke-width="0.3" >-20</text>
<rect x="396" y="1044" width="1.3" height="6" fill="#bbb"/><rect x="681.5" y="1044" width="1.3" height="6" fill="#bbb"/>
<text x="539.5" y="1062" font-size="16" fill="#dcdcdc" text-anchor="middle" stroke="#dcdcdc" stroke-width="0.3" >100W</text>
<rect x="426.0" y="931.8" width="75.8" height="12.2" fill="#000"/>
<rect x="427.2" y="933.0" width="73.4" height="9.8" fill="url(#vb_r)"/>
<rect x="502.4" y="942.4" width="75.4" height="13.2" fill="#000"/>
<rect x="503.6" y="943.6" width="73.0" height="10.8" fill="url(#vb_g)"/>
<rect x="579.0" y="864.1" width="75.8" height="79.9" fill="#000"/>
<rect x="580.2" y="865.3" width="73.4" height="77.5" fill="url(#vb_b)"/>
<rect x="705" y="814" width="1161" height="250" fill="none" stroke="#e0e0e0" stroke-width="1.2" stroke-dasharray="1.6,2.4"/>
<rect x="706" y="815" width="779" height="22" fill="#2e2e2e"/>
<rect x="706" y="837" width="779" height="21.3" fill="#161616"/>
<rect x="706" y="815" width="16" height="43.3" fill="#000"/>
<rect x="722" y="858.3" width="763" height="41.5" fill="#444444"/>
<rect x="706" y="858.3" width="16" height="41.5" fill="url(#rowhd)"/>
<rect x="722" y="899.8" width="763" height="40.80000000000007" fill="#808080"/>
<rect x="706" y="899.8" width="16" height="40.80000000000007" fill="url(#rowhd)"/>
<rect x="722" y="940.6" width="763" height="40.10000000000002" fill="#444444"/>
<rect x="706" y="940.6" width="16" height="40.10000000000002" fill="url(#rowhd)"/>
<rect x="722" y="980.7" width="763" height="40.299999999999955" fill="#808080"/>
<rect x="706" y="980.7" width="16" height="40.299999999999955" fill="url(#rowhd)"/>
<rect x="722" y="1021" width="763" height="40.799999999999955" fill="#444444"/>
<rect x="706" y="1021" width="16" height="40.799999999999955" fill="url(#rowhd)"/>
<text x="0" y="0" font-size="23" fill="#f4f4f4" transform="translate(808.5,846.5) scale(0.775,1)">White</text>
<text x="0" y="0" font-size="23" fill="#f4f4f4" transform="translate(897.3,846.5) scale(0.775,1)">Red</text>
<text x="0" y="0" font-size="23" fill="#f4f4f4" transform="translate(975.5,846.5) scale(0.775,1)">Green</text>
<text x="0" y="0" font-size="23" fill="#f4f4f4" transform="translate(1064.8,846.5) scale(0.775,1)">Blue</text>
<text x="0" y="0" font-size="23" fill="#f4f4f4" transform="translate(1143.1,846.5) scale(0.775,1)">Cyan</text>
<text x="0" y="0" font-size="23" fill="#f4f4f4" transform="translate(1232.1,846.5) scale(0.775,1)">Magenta</text>
<text x="0" y="0" font-size="23" fill="#f4f4f4" transform="translate(1312,846.5) scale(0.775,1)">Yellow</text>
<text x="0" y="0" font-size="23" fill="#f4f4f4" transform="translate(1401,846.5) scale(0.775,1)">100W</text>
<text x="0" y="0" font-size="23" fill="#f4f4f4" transform="translate(727,888.5) scale(0.775,1)">x: CIE31</text>
<text x="0" y="0" font-size="23" fill="#f4f4f4" transform="translate(808.5,888.5) scale(0.775,1)">0,3076</text>
<text x="0" y="0" font-size="23" fill="#f4f4f4" transform="translate(897.3,888.5) scale(0.775,1)">0,6623</text>
<text x="0" y="0" font-size="23" fill="#f4f4f4" transform="translate(975.5,888.5) scale(0.775,1)">0,2840</text>
<text x="0" y="0" font-size="23" fill="#f4f4f4" transform="translate(1064.8,888.5) scale(0.775,1)">0,1519</text>
<text x="0" y="0" font-size="23" fill="#f4f4f4" transform="translate(1143.1,888.5) scale(0.775,1)">0,2080</text>
<text x="0" y="0" font-size="23" fill="#f4f4f4" transform="translate(1232.1,888.5) scale(0.775,1)">0,3166</text>
<text x="0" y="0" font-size="23" fill="#f4f4f4" transform="translate(1312,888.5) scale(0.775,1)">0,4384</text>
<text x="0" y="0" font-size="23" fill="#f4f4f4" transform="translate(1401,888.5) scale(0.775,1)">0,3056</text>
<text x="0" y="0" font-size="23" fill="#f4f4f4" transform="translate(727,930.0) scale(0.775,1)">y: CIE31</text>
<text x="0" y="0" font-size="23" fill="#f4f4f4" transform="translate(808.5,930.0) scale(0.775,1)">0,3169</text>
<text x="0" y="0" font-size="23" fill="#f4f4f4" transform="translate(897.3,930.0) scale(0.775,1)">0,3276</text>
<text x="0" y="0" font-size="23" fill="#f4f4f4" transform="translate(975.5,930.0) scale(0.775,1)">0,6578</text>
<text x="0" y="0" font-size="23" fill="#f4f4f4" transform="translate(1064.8,930.0) scale(0.775,1)">0,0634</text>
<text x="0" y="0" font-size="23" fill="#f4f4f4" transform="translate(1143.1,930.0) scale(0.775,1)">0,3168</text>
<text x="0" y="0" font-size="23" fill="#f4f4f4" transform="translate(1232.1,930.0) scale(0.775,1)">0,1482</text>
<text x="0" y="0" font-size="23" fill="#f4f4f4" transform="translate(1312,930.0) scale(0.775,1)">0,5248</text>
<text x="0" y="0" font-size="23" fill="#f4f4f4" transform="translate(1401,930.0) scale(0.775,1)">0,3131</text>
<text x="0" y="0" font-size="23" fill="#f4f4f4" transform="translate(727,970.8000000000001) scale(0.775,1)">Y</text>
<text x="0" y="0" font-size="23" fill="#f4f4f4" transform="translate(808.5,970.8000000000001) scale(0.775,1)">149,4152</text>
<text x="0" y="0" font-size="23" fill="#f4f4f4" transform="translate(897.3,970.8000000000001) scale(0.775,1)">33,4788</text>
<text x="0" y="0" font-size="23" fill="#f4f4f4" transform="translate(975.5,970.8000000000001) scale(0.775,1)">100,4205</text>
<text x="0" y="0" font-size="23" fill="#f4f4f4" transform="translate(1064.8,970.8000000000001) scale(0.775,1)">13,3357</text>
<text x="0" y="0" font-size="23" fill="#f4f4f4" transform="translate(1143.1,970.8000000000001) scale(0.775,1)">115,4947</text>
<text x="0" y="0" font-size="23" fill="#f4f4f4" transform="translate(1232.1,970.8000000000001) scale(0.775,1)">46,7758</text>
<text x="0" y="0" font-size="23" fill="#f4f4f4" transform="translate(1312,970.8000000000001) scale(0.775,1)">134,2190</text>
<text x="0" y="0" font-size="23" fill="#f4f4f4" transform="translate(1401,970.8000000000001) scale(0.775,1)">285,9439</text>
<text x="0" y="0" font-size="23" fill="#f4f4f4" transform="translate(727,1010.9000000000001) scale(0.775,1)">Target Y</text>
<text x="0" y="0" font-size="23" fill="#f4f4f4" transform="translate(808.5,1010.9000000000001) scale(0.775,1)">149,4152</text>
<text x="0" y="0" font-size="23" fill="#f4f4f4" transform="translate(897.3,1010.9000000000001) scale(0.775,1)">31,7740</text>
<text x="0" y="0" font-size="23" fill="#f4f4f4" transform="translate(975.5,1010.9000000000001) scale(0.775,1)">106,8556</text>
<text x="0" y="0" font-size="23" fill="#f4f4f4" transform="translate(1064.8,1010.9000000000001) scale(0.775,1)">10,7856</text>
<text x="0" y="0" font-size="23" fill="#f4f4f4" transform="translate(1143.1,1010.9000000000001) scale(0.775,1)">117,6412</text>
<text x="0" y="0" font-size="23" fill="#f4f4f4" transform="translate(1232.1,1010.9000000000001) scale(0.775,1)">42,5597</text>
<text x="0" y="0" font-size="23" fill="#f4f4f4" transform="translate(1312,1010.9000000000001) scale(0.775,1)">138,6296</text>
<text x="0" y="0" font-size="23" fill="#f4f4f4" transform="translate(1401,1010.9000000000001) scale(0.775,1)">285,9439</text>
<text x="0" y="0" font-size="23" fill="#f4f4f4" transform="translate(727,1051.2) scale(0.775,1)">&#916;E 2000</text>
<text x="0" y="0" font-size="23" fill="#f4f4f4" transform="translate(808.5,1051.2) scale(0.775,1)">5,5026</text>
<text x="0" y="0" font-size="23" fill="#f4f4f4" transform="translate(897.3,1051.2) scale(0.775,1)">3,3746</text>
<text x="0" y="0" font-size="23" fill="#f4f4f4" transform="translate(975.5,1051.2) scale(0.775,1)">3,4013</text>
<text x="0" y="0" font-size="23" fill="#f4f4f4" transform="translate(1064.8,1051.2) scale(0.775,1)">2,1941</text>
<text x="0" y="0" font-size="23" fill="#f4f4f4" transform="translate(1143.1,1051.2) scale(0.775,1)">2,9451</text>
<text x="0" y="0" font-size="23" fill="#f4f4f4" transform="translate(1232.1,1051.2) scale(0.775,1)">2,3701</text>
<text x="0" y="0" font-size="23" fill="#f4f4f4" transform="translate(1312,1051.2) scale(0.775,1)">4,1078</text>
<text x="0" y="0" font-size="23" fill="#f4f4f4" transform="translate(1401,1051.2) scale(0.775,1)">8,2464</text>
<rect x="1" y="1135.5" width="155.7" height="70" rx="3" fill="url(#btmbtn)"/>
<rect x="6.5" y="1140.5" width="144.7" height="37.5" rx="3" fill="#c0c0c0" stroke="#888" stroke-width="1"/>
<text x="78.8" y="1194.5" font-size="12" fill="#333333" text-anchor="middle" font-weight="bold" >White</text>
<rect x="158.7" y="1135.5" width="156.0" height="70" rx="3" fill="url(#btmbtn)"/>
<rect x="164.2" y="1140.5" width="145.0" height="37.5" rx="3" fill="#c00000" stroke="#888" stroke-width="1"/>
<text x="236.7" y="1194.5" font-size="12" fill="#333333" text-anchor="middle" font-weight="bold" >Red</text>
<rect x="316.7" y="1135.5" width="156.0" height="70" rx="3" fill="url(#btmbtn)"/>
<rect x="322.2" y="1140.5" width="145.0" height="37.5" rx="3" fill="#00c000" stroke="#888" stroke-width="1"/>
<text x="394.7" y="1194.5" font-size="12" fill="#333333" text-anchor="middle" font-weight="bold" >Green</text>
<rect x="474.4" y="1135.5" width="156.0" height="70" rx="3" fill="url(#btmbtn)"/>
<rect x="479.9" y="1140.5" width="145.0" height="37.5" rx="3" fill="#0000c0" stroke="#888" stroke-width="1"/>
<text x="552.4" y="1194.5" font-size="12" fill="#333333" text-anchor="middle" font-weight="bold" >Blue</text>
<rect x="632" y="1135.5" width="156.79999999999995" height="70" rx="3" fill="url(#btmbtn)"/>
<rect x="637.5" y="1140.5" width="145.79999999999995" height="37.5" rx="3" fill="#00c0c0" stroke="#888" stroke-width="1"/>
<text x="710.4" y="1194.5" font-size="12" fill="#333333" text-anchor="middle" font-weight="bold" >Cyan</text>
<rect x="790.5" y="1135.5" width="156.0" height="70" rx="3" fill="url(#btmbtn)"/>
<rect x="796.0" y="1140.5" width="145.0" height="37.5" rx="3" fill="#c000c0" stroke="#888" stroke-width="1"/>
<text x="868.5" y="1194.5" font-size="12" fill="#333333" text-anchor="middle" font-weight="bold" >Magenta</text>
<rect x="948.6" y="1135.5" width="155.39999999999998" height="70" rx="3" fill="url(#btmbtn)"/>
<rect x="954.1" y="1140.5" width="144.39999999999998" height="37.5" rx="3" fill="#c0c000" stroke="#888" stroke-width="1"/>
<text x="1026.3" y="1194.5" font-size="12" fill="#333333" text-anchor="middle" font-weight="bold" >Yellow</text>
<rect x="1106.3" y="1135.5" width="155.70000000000005" height="70" rx="3" fill="url(#btmsel)"/>
<rect x="1111.8" y="1140.5" width="144.70000000000005" height="37.5" rx="3" fill="#ffffff" stroke="#ddd" stroke-width="1"/>
<text x="1184.2" y="1194.5" font-size="12" fill="#ffffff" text-anchor="middle" font-weight="bold" >100W</text>
<rect x="1262" y="1135.5" width="276" height="70" rx="2" fill="url(#btmbar)"/>
<rect x="1539.4" y="1135.6" width="49.6" height="70" rx="3" fill="url(#ctlbtn)"/>
<rect x="1539.4" y="1153.8" width="49.6" height="1.2" fill="#5a5a5a"/>
<circle cx="1564.3" cy="1144.5" r="6.5" fill="url(#ctlcirc)"/>
<polygon points="1559.8,1147 1568.8,1147 1564.3,1141.8" fill="#333"/>
<rect x="1549.5" y="1161" width="29" height="29" rx="3" fill="#999" stroke="#222" stroke-width="2.5"/>
<rect x="1555" y="1166" width="18" height="18" fill="#111"/>
<rect x="1590.3" y="1135.6" width="46.7" height="30.2" rx="2" fill="url(#ctlbtn)"/>
<circle cx="1614.0" cy="1151" r="10" fill="url(#ctlcirc)"/>
<rect x="1637.8" y="1135.6" width="46.100000000000094" height="30.2" rx="2" fill="url(#ctlbtn)"/>
<circle cx="1661.2" cy="1151" r="10" fill="url(#ctlcirc)"/>
<rect x="1684.7" y="1135.6" width="46.099999999999866" height="30.2" rx="2" fill="url(#ctlbtn)"/>
<circle cx="1708.2" cy="1151" r="10" fill="url(#ctlcirc)"/>
<rect x="1731.6" y="1135.6" width="45.80000000000014" height="30.2" rx="2" fill="url(#ctlbtn)"/>
<circle cx="1754.9" cy="1151" r="10" fill="url(#ctlcirc)"/>
<rect x="1778.2" y="1135.6" width="45.79999999999991" height="30.2" rx="2" fill="url(#ctlbtn)"/>
<circle cx="1801.5" cy="1151" r="10" fill="url(#ctlcirc)"/>
<rect x="1610.05" y="1147" width="8" height="8" fill="#333"/>
<polygon points="1658.25,1146 1666.25,1151 1658.25,1156" fill="#333"/>
<text x="1708.2" y="1155.5" font-size="11" fill="#333" text-anchor="middle" font-weight="bold" >[&#8596;]</text>
<text x="1754.9" y="1157" font-size="17" fill="#333" text-anchor="middle" font-weight="bold" >&#8734;</text>
<circle cx="1801.5" cy="1151" r="5" fill="none" stroke="#333" stroke-width="2.2" stroke-dasharray="11,4.7"/>
<rect x="1590.3" y="1168" width="140.6" height="40" rx="3" fill="url(#ctlbtn)"/>
<rect x="1731.6" y="1168" width="141" height="40" rx="3" fill="url(#ctlbtn)"/>
<circle cx="1622.5" cy="1183.5" r="10" fill="url(#ctlcirc)"/>
<circle cx="1844" cy="1183.5" r="10" fill="url(#ctlcirc)"/>
<text x="1622.5" y="1189" font-size="17" fill="#333" text-anchor="middle" font-weight="bold" >&#171;</text>
<text x="1844" y="1189" font-size="17" fill="#333" text-anchor="middle" font-weight="bold" >&#187;</text>
<text x="1676.8" y="1191.5" font-size="24.5" fill="#333" text-anchor="middle" stroke="#333" stroke-width="0.6">Back</text>
<text x="1788" y="1191.5" font-size="24.5" fill="#333" text-anchor="middle" stroke="#333" stroke-width="0.6" letter-spacing="0.8">Next</text>
<g stroke="#e00000" stroke-width="5.6" stroke-linecap="round"><path d="M1848 1138.5 V1163"/><path d="M1837.4 1144.7 L1858.6 1156.9"/><path d="M1837.4 1156.9 L1858.6 1144.7"/></g>
</svg>
<svg width="1875" height="1200" viewBox="0 0 1875 1200" style="z-index:0">
<defs><linearGradient id="locg" x1="0" x2="0" y1="208" y2="755" gradientUnits="userSpaceOnUse"><stop offset="0" stop-color="#009900"/><stop offset="0.35" stop-color="#009a30"/><stop offset="0.52" stop-color="#009a70"/><stop offset="0.62" stop-color="#009595"/><stop offset="0.78" stop-color="#003a90"/><stop offset="1" stop-color="#0000a0"/></linearGradient><linearGradient id="topg" x1="1394.9" y1="303.4" x2="1729.0" y2="540.8" gradientUnits="userSpaceOnUse"><stop offset="0" stop-color="#009900"/><stop offset="0.35" stop-color="#999900"/><stop offset="0.6" stop-color="#994000"/><stop offset="1" stop-color="#990000"/></linearGradient><linearGradient id="botg" x1="1265.2" y1="0" x2="1749.0" y2="0" gradientUnits="userSpaceOnUse"><stop offset="0" stop-color="#0000a0"/><stop offset="0.3" stop-color="#600098"/><stop offset="0.55" stop-color="#990066"/><stop offset="1" stop-color="#990000"/></linearGradient><clipPath id="locclip"><path d="M1285.5 754.6 L1283.1 753.4 L1279.6 751.7 L1275.6 749.6 L1271.3 747.0 L1266.8 744.0 L1261.9 740.6 L1256.8 736.6 L1251.8 731.9 L1247.0 726.3 L1242.2 720.0 L1237.3 713.1 L1232.3 705.9 L1227.0 698.5 L1221.4 690.7 L1215.9 682.4 L1210.7 673.4 L1205.8 663.3 L1201.0 652.4 L1196.5 641.1 L1192.3 630.0 L1188.4 619.2 L1184.8 608.4 L1181.4 597.5 L1178.2 586.7 L1175.2 575.9 L1172.5 565.0 L1169.9 554.1 L1167.3 543.3 L1164.7 532.2 L1162.2 521.0 L1159.8 510.1 L1157.6 500.0 L1155.7 491.0 L1154.0 482.8 L1152.4 474.8 L1150.8 466.7 L1149.2 458.3 L1147.7 449.8 L1146.3 441.4 L1145.0 433.0 L1143.8 424.5 L1142.7 416.0 L1141.7 407.7 L1140.8 400.0 L1140.0 393.2 L1139.3 387.0 L1138.8 381.1 L1138.3 375.0 L1137.9 368.6 L1137.6 362.0 L1137.4 355.7 L1137.3 350.0 L1137.2 345.6 L1137.3 342.0 L1137.4 338.2 L1137.5 333.0 L1137.7 325.5 L1137.9 316.4 L1138.1 307.4 L1138.5 300.0 L1138.9 294.8 L1139.4 291.0 L1140.1 287.7 L1140.8 284.0 L1141.7 279.8 L1142.7 275.6 L1143.8 271.4 L1145.0 267.3 L1146.2 263.4 L1147.4 259.6 L1148.7 255.9 L1150.0 252.3 L1151.4 248.8 L1152.8 245.3 L1154.3 242.1 L1155.8 239.0 L1157.4 236.2 L1159.0 233.7 L1160.7 231.3 L1162.5 229.0 L1164.3 226.8 L1166.1 224.6 L1168.0 222.6 L1170.0 220.7 L1172.2 218.9 L1174.4 217.1 L1176.8 215.5 L1179.2 214.0 L1181.6 212.6 L1184.2 211.4 L1186.7 210.3 L1189.2 209.4 L1191.6 208.8 L1193.9 208.4 L1196.4 208.2 L1199.0 208.0 L1202.0 207.8 L1205.3 207.8 L1208.6 207.8 L1211.7 208.0 L1214.5 208.4 L1217.1 208.9 L1219.7 209.6 L1222.5 210.2 L1225.0 210.7 L1227.3 211.2 L1230.3 212.0 L1235.0 213.6 L1242.1 216.4 L1250.8 220.1 L1260.2 224.1 L1269.2 228.1 L1277.6 232.0 L1285.9 235.9 L1294.1 239.9 L1302.3 244.1 L1310.3 248.4 L1318.2 252.8 L1326.1 257.4 L1334.0 262.0 L1341.9 266.8 L1349.7 271.7 L1357.5 276.7 L1365.3 281.7 L1373.1 286.9 L1380.8 292.1 L1388.6 297.4 L1396.3 302.8 L1404.0 308.2 L1411.7 313.6 L1419.4 319.1 L1427.2 324.7 L1434.9 330.3 L1442.7 335.9 L1450.4 341.6 L1458.1 347.3 L1465.8 353.0 L1473.6 358.7 L1481.2 364.5 L1488.9 370.2 L1496.6 376.0 L1504.3 381.7 L1511.9 387.4 L1519.5 393.2 L1527.1 398.9 L1534.6 404.5 L1542.1 410.2 L1549.6 415.8 L1556.9 421.4 L1564.3 427.0 L1571.5 432.5 L1578.7 437.9 L1585.8 443.3 L1592.9 448.6 L1599.8 453.9 L1606.7 459.1 L1613.4 464.2 L1620.0 469.2 L1626.6 474.1 L1632.9 478.9 L1639.2 483.6 L1645.3 488.3 L1651.2 492.8 L1656.9 497.1 L1662.4 501.3 L1667.7 505.3 L1672.8 509.1 L1677.8 512.9 L1682.6 516.5 L1687.3 520.1 L1691.8 523.5 L1696.1 526.7 L1700.2 529.8 L1704.1 532.7 L1707.8 535.5 L1711.3 538.2 L1714.7 540.7 L1717.8 543.1 L1720.8 545.4 L1723.7 547.6 L1726.4 549.6 L1728.9 551.5 L1731.3 553.3 L1733.5 555.0 L1735.7 556.7 L1737.7 558.2 L1739.6 559.6 L1741.4 561.0 L1743.1 562.3 L1744.7 563.5 L1746.3 564.6 L1747.7 565.8 L1749.1 566.8 L1750.5 567.9 L1751.8 568.8 L1753.0 569.8 L1754.2 570.7 L1755.3 571.5 L1756.3 572.3 L1757.3 573.0 L1758.3 573.8 L1759.2 574.4 L1760.0 575.0 L1760.8 575.6 L1761.5 576.2 L1762.2 576.7 L1762.8 577.1 L1763.4 577.6 L1763.9 578.0 L1764.5 578.4 L1764.9 578.8 L1765.4 579.1 L1765.8 579.4 L1766.2 579.7 L1766.5 580.0 L1766.9 580.2 L1767.1 580.4 L1767.4 580.6 L1767.6 580.8 L1767.8 580.9 L1768.0 581.1 L1768.2 581.2 L1768.4 581.4 L1768.6 581.5 L1768.7 581.6 L1768.9 581.8 L1769.0 581.9 L1769.2 582.0 L1769.3 582.1 L1769.5 582.2 L1769.6 582.3 L1769.8 582.4 L1769.9 582.6 L1770.1 582.7 L1770.2 582.8 L1770.3 582.8 L1770.4 582.9 L1770.5 583.0 L1770.6 583.0 L1770.7 583.1 L1770.7 583.1 L1770.8 583.2 L1770.8 583.2 L1770.8 583.2 L1770.9 583.3 L1770.9 583.3 L1770.9 583.3 L1770.9 583.3 Z"/></clipPath></defs>
<g clip-path="url(#locclip)"><rect x="1135" y="204" width="728" height="554" fill="url(#locg)"/>
<polygon points="1394.9,363.4 1472.9,150 1900,150 1900,560.8 1689.0,540.8" fill="url(#topg)"/>
<polygon points="1265.2,718.2 1689.0,540.8 1900,560.8 1900,800 1265.2,800" fill="url(#botg)"/>
</g></svg>
<div style="position:absolute;left:1260px;top:360px;width:432px;height:362px;z-index:0;clip-path:polygon(134.9px 3.4px,429.0px 180.8px,5.2px 358.2px);background:radial-gradient(circle at 145.9px 181.4px, rgba(255,255,255,1) 0px, rgba(255,255,255,0.55) 25px, rgba(255,255,255,0) 90px),conic-gradient(from 0deg at 145.9px 181.4px, #15ff00 0deg, #ffff00 38.5deg, #ff0000 90deg, #ff00ff 176.5deg, #0000ff 218.6deg, #00ffff 270deg, #00ff00 356.5deg, #15ff00 360deg);"></div>
<div style="position:absolute;left:1611px;top:213px;width:245px;height:206px;z-index:0;background:radial-gradient(ellipse at 50% 50%, #ffffff 0%, rgba(255,255,255,0) 70%),linear-gradient(135deg,#90ffd0 0%,#c0fff0 30%,#ffffff 50%,#ffc0d8 75%,#ff98c8 100%)"></div>
<canvas id="cie" width="727" height="553" style="z-index:1"></canvas>
<canvas id="ins" width="245" height="206" style="z-index:1"></canvas>
<svg id="fg" width="1875" height="1200" viewBox="0 0 1875 1200" style="z-index:2;pointer-events:none">
<circle cx="1707.9" cy="541.3" r="4.6" fill="#c00000" stroke="#000" stroke-width="1.5"/>
<circle cx="1380.7" cy="324.3" r="4.6" fill="#00a000" stroke="#000" stroke-width="1.5"/>
<circle cx="1266.4" cy="714.8" r="4.6" fill="#0000a0" stroke="#000" stroke-width="1.5"/>
<circle cx="1314.9" cy="548.4" r="4.6" fill="#00b0b0" stroke="#000" stroke-width="1.5"/>
<circle cx="1408.9" cy="659.1" r="4.6" fill="#b000b0" stroke="#000" stroke-width="1.5"/>
<circle cx="1514.2" cy="411.7" r="4.6" fill="#b0b000" stroke="#000" stroke-width="1.5"/>
<circle cx="1401.1" cy="548.3" r="4.6" fill="#a8a8a8" stroke="#000" stroke-width="1.5"/>
<circle cx="1399.3" cy="550.8" r="4.6" fill="#ffffff" stroke="#000" stroke-width="1.5"/>
<rect x="1680.5" y="532.7" width="14.6" height="14.6" fill="none" stroke="#fff" stroke-width="1.9"/>
<rect x="1386.4" y="355.3" width="14.6" height="14.6" fill="none" stroke="#fff" stroke-width="1.9"/>
<rect x="1256.7" y="710.1" width="14.6" height="14.6" fill="none" stroke="#fff" stroke-width="1.9"/>
<rect x="1321.2" y="533.5" width="14.6" height="14.6" fill="none" stroke="#fff" stroke-width="1.9"/>
<rect x="1404.5" y="648.2" width="14.6" height="14.6" fill="none" stroke="#fff" stroke-width="1.9"/>
<rect x="1489.6" y="417.5" width="14.6" height="14.6" fill="none" stroke="#fff" stroke-width="1.9"/>
<rect x="1397.4" y="533.3" width="14.6" height="14.6" fill="none" stroke="#000" stroke-width="1.9"/>
<circle cx="1401.1" cy="548.3" r="4.6" fill="#a8a8a8" stroke="#000" stroke-width="1.5"/>
<circle cx="1399.3" cy="550.8" r="4.6" fill="#ffffff" stroke="#000" stroke-width="1.5"/>
<rect x="1723.5" y="307" width="15.5" height="15.5" fill="#fff" stroke="#000" stroke-width="1.8"/>
<circle cx="1706.5" cy="365.8" r="5" fill="#b8b8b8" stroke="#222" stroke-width="1.2"/>
<circle cx="1697.3" cy="381" r="5" fill="#fff" stroke="#222" stroke-width="1.2"/>
<rect x="1575.7" y="721" width="283.3" height="30" fill="#333333"/>
<text x="1576" y="745" font-size="22.5" fill="#f4f4f4" text-anchor="start" letter-spacing="-0.25" stroke="#f4f4f4" stroke-width="0.3" >Gamut Coverage: &#160;99,9%</text>
</svg>
<script>(function(){
var L=[[0.1741,0.0050],[0.1740,0.0050],[0.1738,0.0049],[0.1736,0.0049],[0.1733,0.0048],[0.1730,0.0048],[0.1726,0.0048],[0.1721,0.0048],[0.1714,0.0051],[0.1703,0.0058],[0.1689,0.0069],[0.1669,0.0086],[0.1644,0.0109],[0.1611,0.0138],[0.1566,0.0177],[0.1510,0.0227],[0.1440,0.0297],[0.1355,0.0399],[0.1241,0.0578],[0.1096,0.0868],[0.0913,0.1327],[0.0687,0.2007],[0.0454,0.2950],[0.0235,0.4127],[0.0082,0.5384],[0.0039,0.6548],[0.0139,0.7502],[0.0389,0.8120],[0.0743,0.8338],[0.1142,0.8262],[0.1547,0.8059],[0.1929,0.7816],[0.2296,0.7543],[0.2658,0.7243],[0.3016,0.6923],[0.3373,0.6589],[0.3731,0.6245],[0.4087,0.5896],[0.4441,0.5547],[0.4788,0.5202],[0.5125,0.4866],[0.5448,0.4544],[0.5752,0.4242],[0.6029,0.3965],[0.6270,0.3725],[0.6482,0.3514],[0.6658,0.3340],[0.6801,0.3197],[0.6915,0.3083],[0.7006,0.2993],[0.7079,0.2920],[0.7140,0.2859],[0.7190,0.2809],[0.7230,0.2770],[0.7260,0.2740],[0.7283,0.2717],[0.7300,0.2700],[0.7311,0.2689],[0.7320,0.2680],[0.7327,0.2673],[0.7334,0.2666],[0.7340,0.2660],[0.7344,0.2656],[0.7346,0.2654],[0.7347,0.2653]];
var OX=1135.4,OY=757.6,SX=865.0,SY=657.0;
function enc(v){return v<=0.0031308?12.92*v:1.055*Math.pow(v,1/2.4)-0.055;}
function col(x,y,out){
  var X=x/y,Z=(1-x-y)/y;
  var r=3.2406*X-1.5372-0.4986*Z, g=-0.9689*X+1.8758+0.0415*Z, b=0.0557*X-0.2040+1.0570*Z;
  var inside=(r>=0&&g>=0&&b>=0);
  if(r<0)r=0; if(g<0)g=0; if(b<0)b=0;
  var m=Math.max(r,g,b); if(m<=0)m=1;
  r=r/m; g=g/m; b=b/m;
  var k=inside?255:153;
  out[0]=r*k; out[1]=g*k; out[2]=b*k;
}
function draw(){
  var c=document.getElementById('cie'); if(!c||!c.getContext)return;
  var W=c.width,H=c.height, ctx=c.getContext('2d');
  var left=1136, top=205;
  var off=document.createElement('canvas'); off.width=W; off.height=H;
  var octx=off.getContext('2d'); var img=octx.createImageData(W,H); var d=img.data; var o=[0,0,0];
  for(var j=0;j<H;j++){ var y=(OY-(top+j+0.5))/SY; if(y<0.001)y=0.001;
    for(var i=0;i<W;i++){ var x=(left+i+0.5-OX)/SX; col(x,y,o); var p=(j*W+i)*4; d[p]=o[0];d[p+1]=o[1];d[p+2]=o[2];d[p+3]=255; } }
  octx.putImageData(img,0,0);
  ctx.save(); ctx.beginPath();
  var T=[[1285.5,754.6],[1271.3,747],[1251.8,731.9],[1232.3,705.9],[1210.7,673.4],[1192.3,630],[1178.2,586.7],[1167.3,543.3],[1157.6,500],[1150.8,466.7],[1145,433],[1140.8,400],[1138.3,375],[1137.3,350],[1137.5,333],[1138.5,300],[1140.8,284],[1145,267.3],[1150,252.3],[1155.8,239],[1162.5,229],[1170,220.7],[1179.2,214],[1189.2,209.4],[1199,208.0],[1211.7,208.0],[1222.5,210.25],[1235,213.6]];
  var PT=T.slice();
  for(var q=30;q<L.length;q++){ PT.push([OX+SX*L[q][0], OY-SY*L[q][1]]); }
  var n=PT.length;
  ctx.moveTo(PT[0][0]-left, PT[0][1]-top);
  for(var q=0;q<n-1;q++){
    var p0=PT[Math.max(0,q-1)], p1=PT[q], p2=PT[q+1], p3=PT[Math.min(n-1,q+2)];
    for(var t=1;t<=8;t++){ var u=t/8, u2=u*u, u3=u2*u;
      var xx=0.5*((2*p1[0])+(-p0[0]+p2[0])*u+(2*p0[0]-5*p1[0]+4*p2[0]-p3[0])*u2+(-p0[0]+3*p1[0]-3*p2[0]+p3[0])*u3);
      var yy=0.5*((2*p1[1])+(-p0[1]+p2[1])*u+(2*p0[1]-5*p1[1]+4*p2[1]-p3[1])*u2+(-p0[1]+3*p1[1]-3*p2[1]+p3[1])*u3);
      ctx.lineTo(xx-left, yy-top); }
  }
  ctx.closePath(); ctx.clip(); ctx.drawImage(off,0,0); ctx.restore();
  // inset
  var c2=document.getElementById('ins'); var W2=c2.width,H2=c2.height, ctx2=c2.getContext('2d');
  var img2=ctx2.createImageData(W2,H2); var d2=img2.data;
  var cx=122.0, cy=102.9, sx=5150, sy=4200;
  for(var j=0;j<H2;j++){ var y=0.3290-(j+0.5-cy)/sy;
    for(var i=0;i<W2;i++){ var x=0.3127+(i+0.5-cx)/sx; col(x,y,o); var p=(j*W2+i)*4; d2[p]=o[0];d2[p+1]=o[1];d2[p+2]=o[2];d2[p+3]=255; } }
  ctx2.putImageData(img2,0,0);
}
draw();
})();
</script>
</body></html>
